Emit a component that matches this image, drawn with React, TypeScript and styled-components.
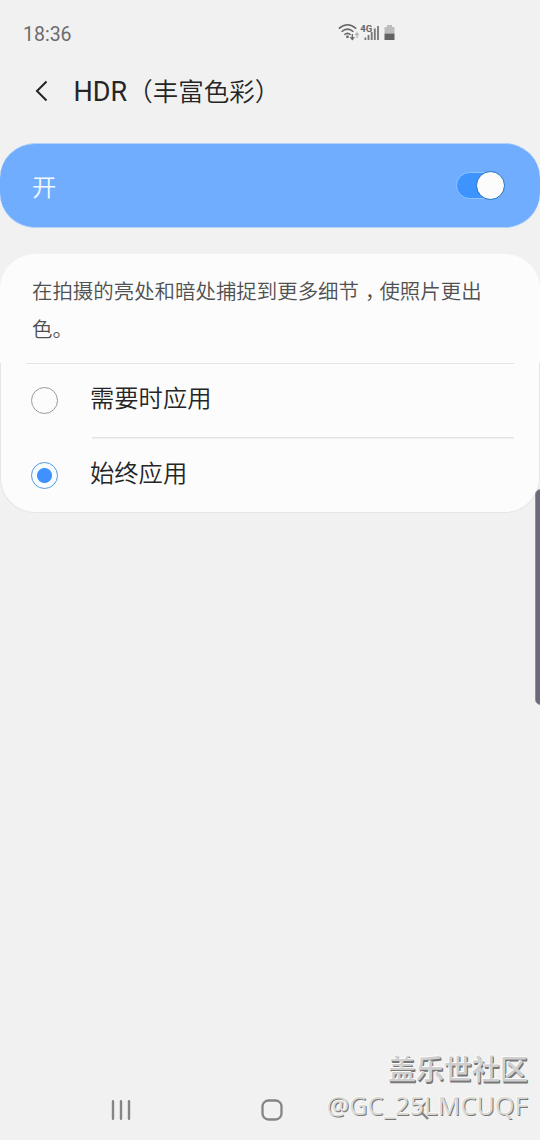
import React, { useState } from "react";
import styled, { createGlobalStyle } from "styled-components";

type ApplyMode = "auto" | "always";

const modes: { value: ApplyMode; label: string }[] = [
  { value: "auto", label: "需要时应用" },
  { value: "always", label: "始终应用" },
];

const App = () => {
  const [enabled, setEnabled] = useState<boolean>(true);
  const [mode, setMode] = useState<ApplyMode>("always");

  return (
    <Screen>
      <GlobalStyle />
      <StatusBar>
        <Clock>18:36</Clock>
        <StatusIcons />
      </StatusBar>
      <Header>
        <BackButton aria-label="返回">
          <svg width="14" height="22" viewBox="0 0 14 22">
            <path
              d="M12.5 1.5 L3 11 L12.5 20.5"
              fill="none"
              stroke="#252525"
              strokeWidth="2"
            />
          </svg>
        </BackButton>
        <Title>
          <Latin>HDR</Latin>（丰富色彩）
        </Title>
      </Header>
      <MasterSwitch onClick={() => setEnabled(!enabled)}>
        <SwitchLabel>{enabled ? "开" : "关"}</SwitchLabel>
        <Track on={enabled}>
          <Thumb />
        </Track>
      </MasterSwitch>
      <Description>
        在拍摄的亮处和暗处捕捉到更多细节<Comma>，</Comma>使照片更出
        <br />
        色。
      </Description>
      <Options>
        {modes.map(({ value, label }) => (
          <Option key={value} onClick={() => setMode(value)}>
            <Radio checked={mode === value} />
            <OptionLabel>{label}</OptionLabel>
          </Option>
        ))}
      </Options>
      <EdgeHandle />
      <NavBar>
        <svg width="20" height="20" viewBox="0 0 20 20">
          <path
            d="M2 1.2 V18.8 M10 1.2 V18.8 M18 1.2 V18.8"
            stroke="#858585"
            strokeWidth="2.4"
            strokeLinecap="round"
          />
        </svg>
        <svg width="22" height="22" viewBox="0 0 22 22">
          <rect
            x="1.5"
            y="1.5"
            width="19"
            height="19"
            rx="6"
            fill="none"
            stroke="#858585"
            strokeWidth="2.3"
          />
        </svg>
        <svg width="20" height="20" viewBox="0 0 20 20">
          <path
            d="M16 1 L7 10 L16 19"
            fill="none"
            stroke="#858585"
            strokeWidth="2.4"
          />
        </svg>
      </NavBar>
      <Watermark>
        <Community>盖乐世社区</Community>
        <UserName>@GC_25LMCUQF</UserName>
      </Watermark>
    </Screen>
  );
};

const StatusIcons = () => (
  <svg width="60" height="20" viewBox="0 0 60 20">
    <g fill="none" stroke="#666" strokeWidth="1.5">
      <path d="M0.8 5.6 Q9.5 -2.2 18.2 5.6" />
      <path d="M3.6 8.8 Q9.5 3.4 15.4 8.8" />
      <path d="M6.4 11.8 Q9.5 9 12.6 11.8" />
    </g>
    <circle cx="9.5" cy="13.8" r="1.4" fill="#666" />
    <path
      d="M14.3 11 V16 M12.3 14.2 L14.3 16.6 L16.3 14.2"
      fill="none"
      stroke="#666"
      strokeWidth="1.3"
    />
    <path
      d="M19 15 V10.5 M17.2 12.2 L19 10 L20.8 12.2"
      fill="none"
      stroke="#b5b5b5"
      strokeWidth="1.3"
    />
    <text
      x="22.2"
      y="8.6"
      fontFamily="Roboto"
      fontSize="9.5"
      fontWeight="700"
      fill="#666"
    >
      4G
    </text>
    <path
      d="M27.4 14.5 V17 M30.5 12 V17 M33.7 9 V17 M36.8 5.5 V17 M40 3 V17"
      stroke="#777"
      strokeWidth="1.8"
    />
    <path d="M49 2 h5 v2 h2.5 v6.5 h-10 v-6.5 h2.5 z" fill="#bdbdbd" />
    <path d="M46.5 10.5 h10 v6.5 h-10 z" fill="#636363" />
  </svg>
);

const GlobalStyle = createGlobalStyle`
  * {
    box-sizing: border-box;
  }
  body {
    margin: 0;
    background: #f1f1f1;
  }
`;

const Screen = styled.div`
  position: relative;
  width: 540px;
  height: 1140px;
  overflow: hidden;
  display: flex;
  flex-direction: column;
  background: #f1f1f1;
  color: #252525;
  font-family: Roboto, "Noto Sans CJK SC", sans-serif;
`;

const StatusBar = styled.div`
  height: 66px;
  flex-shrink: 0;
  display: flex;
  align-items: center;
  padding-left: 23px;
`;

const Clock = styled.div`
  width: 315px;
  font-size: 19.5px;
  line-height: 24px;
  padding-top: 3px;
  color: #6c6c6c;
`;

const Header = styled.div`
  height: 77px;
  flex-shrink: 0;
  display: flex;
  align-items: flex-start;
  padding: 0 0 0 34px;
`;

const BackButton = styled.button`
  display: flex;
  width: 39px;
  margin-top: 14px;
  padding: 0;
  border: none;
  background: none;
  cursor: pointer;
`;

const Title = styled.div`
  margin-top: 6px;
  font-family: "Noto Sans CJK SC", sans-serif;
  font-size: 25.5px;
  font-weight: 350;
  line-height: 36px;
  white-space: nowrap;
`;

const Latin = styled.span`
  margin-left: 0.5px;
  font-family: Roboto, sans-serif;
  font-size: 27px;
  font-weight: 400;
`;

const MasterSwitch = styled.div`
  height: 85px;
  flex-shrink: 0;
  display: flex;
  align-items: center;
  justify-content: space-between;
  padding: 0 35px 0 32px;
  border: solid #b2d2fa;
  border-width: 1px 0;
  border-radius: 35px;
  background: #70adff;
  cursor: pointer;
`;

const SwitchLabel = styled.div`
  padding-top: 1px;
  font-family: "Noto Sans CJK SC", sans-serif;
  font-size: 24.3px;
  font-weight: 350;
  line-height: 36px;
  color: #f4faff;
`;

const Track = styled.div<{ on: boolean }>`
  width: 49px;
  height: 27px;
  display: flex;
  align-items: center;
  justify-content: ${({ on }) => (on ? "flex-end" : "flex-start")};
  border: 1.5px solid #93c4ff;
  border-radius: 14px;
  background: ${({ on }) => (on ? "#3e94ff" : "#8fb8ee")};
`;

const Thumb = styled.div`
  width: 29px;
  height: 29px;
  flex-shrink: 0;
  margin-right: -1px;
  border: 1.5px solid #1b6dc1;
  border-radius: 50%;
  background: #fcfcfc;
`;

const Description = styled.div`
  height: 109px;
  flex-shrink: 0;
  margin-top: 26px;
  padding: 17px 40px 0 32px;
  border-radius: 35px 35px 0 0;
  background: #fcfcfc;
  color: #505050;
  font-family: "Noto Sans CJK SC", sans-serif;
  font-size: 20.45px;
  font-weight: 350;
  line-height: 38px;
`;

/* keeps the comma in the middle of its full-width cell */
const Comma = styled.span`
  margin-left: 6px;
  letter-spacing: -6px;
`;

const Options = styled.div`
  height: 150px;
  flex-shrink: 0;
  border: 1px solid #e6e6e6;
  border-top: none;
  border-radius: 0 0 35px 35px;
  background: linear-gradient(#e4e4e4, #e4e4e4) 25px 0 / 488px 1px no-repeat
    #fcfcfc;
`;

const Option = styled.div`
  height: 74px;
  display: flex;
  align-items: center;
  padding-left: 30px;
  cursor: pointer;
  & + & {
    height: 76px;
    background: linear-gradient(#e4e4e4, #e4e4e4) 91px 0 / 422px 1.5px no-repeat;
  }
`;

const Radio = styled.div<{ checked: boolean }>`
  width: 27px;
  height: 27px;
  margin-right: 32px;
  border: 1.4px solid ${({ checked }) => (checked ? "#5596df" : "#9a9a9a")};
  border-radius: 50%;
  background: ${({ checked }) =>
    checked
      ? "radial-gradient(circle, #3e91ff 7px, #f7fdff 8px)"
      : "transparent"};
`;

const OptionLabel = styled.div`
  font-family: "Noto Sans CJK SC", sans-serif;
  font-size: 24.3px;
  font-weight: 350;
  line-height: 36px;
  padding-bottom: 6px;
`;

const EdgeHandle = styled.div`
  position: absolute;
  top: 489px;
  right: -6px;
  width: 11px;
  height: 216px;
  border: 1px solid #8f8f98;
  border-radius: 6px;
  background: #6b6a79;
`;

const NavBar = styled.div`
  height: 60px;
  margin-top: auto;
  display: flex;
  align-items: center;
  justify-content: space-between;
  padding: 0 108px 0 111px;
`;

const Watermark = styled.div`
  position: absolute;
  right: 12px;
  bottom: 17px;
  display: flex;
  flex-direction: column;
  align-items: flex-end;
  white-space: nowrap;
`;

const Community = styled.div`
  font-family: "Noto Sans CJK SC", sans-serif;
  font-size: 28px;
  font-weight: 500;
  line-height: 38px;
  color: #cfcfcf;
  text-shadow: -1px -1px 0 #fafafa, 1px 1px 0 #777, 1px 2px 0 #777;
`;

const UserName = styled.div`
  font-family: "Open Sans", "Noto Sans", sans-serif;
  font-size: 25px;
  letter-spacing: 0.3px;
  line-height: 36px;
  color: #d8d8d6;
  text-shadow: -1px -1px 0 #fbf8ee, 1px 1px 0 #777;
`;

export default App;
